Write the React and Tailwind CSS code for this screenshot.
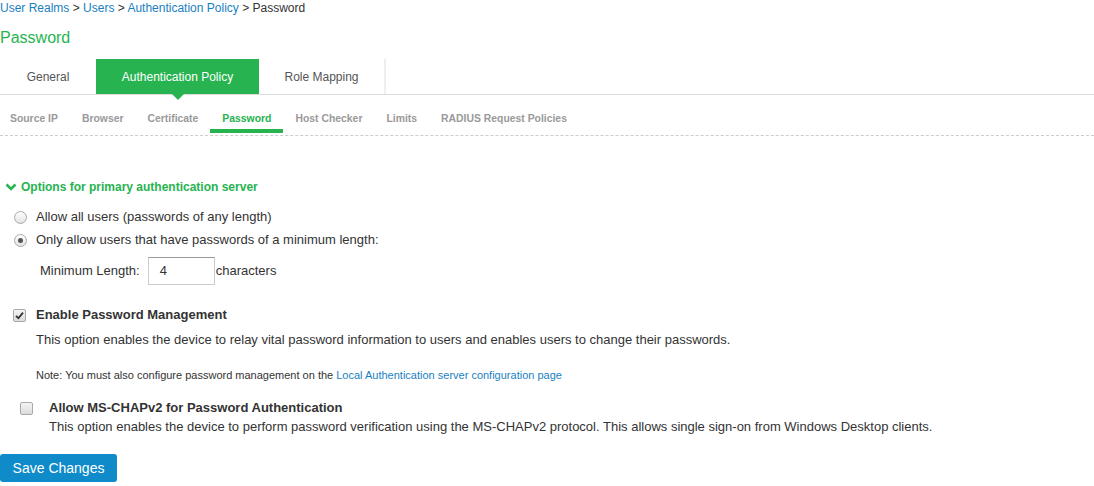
import React from "react";

const GREEN = "#26b350";

function Radio({ checked }) {
  return (
    <span className="flex items-center justify-center w-[13px] h-[13px] rounded-full border border-[#a9a9a9] bg-gradient-to-b from-white to-[#e3e3e3]">
      {checked && <span className="block w-[5px] h-[5px] rounded-full bg-[#555]" />}
    </span>
  );
}

function Check({ checked }) {
  return (
    <span className="flex items-center justify-center w-[13px] h-[13px] rounded-[2px] border border-[#a9a9a9] bg-gradient-to-b from-[#f4f4f4] to-[#dcdcdc]">
      {checked && (
        <svg width="9" height="9" viewBox="0 0 9 9">
          <path d="M1 4.8 L3.4 7.2 L8 1.6" fill="none" stroke="#333" strokeWidth="1.8" />
        </svg>
      )}
    </span>
  );
}

export default function App() {
  const subTabs = ["Source IP", "Browser", "Certificate", "Password", "Host Checker", "Limits", "RADIUS Request Policies"];

  return (
    <div className="w-[1094px] h-[486px] bg-white text-[#333] font-['Liberation_Sans',Arial,sans-serif] overflow-hidden">
      {/* Breadcrumb */}
      <div className="h-[16px] leading-[16px] text-[12px]">
        <span className="text-[#1a7fc1]">User Realms</span> &gt;{" "}
        <span className="text-[#1a7fc1]">Users</span> &gt;{" "}
        <span className="text-[#1a7fc1]">Authentication Policy</span> &gt; Password
      </div>

      <h1 className="mt-[12px] h-[20px] leading-[20px] text-[16px] font-normal" style={{ color: GREEN }}>
        Password
      </h1>

      {/* Main tabs */}
      <div className="mt-[11px] flex h-[36px] border-b border-[#ddd] text-[12px]">
        <div className="w-[96px] flex items-center justify-center text-[#555]">General</div>
        <div className="relative w-[163px] flex items-center justify-center text-white bg-[#26b350]">
          Authentication Policy
          <span className="absolute left-1/2 -translate-x-1/2 top-full w-0 h-0 border-l-[6px] border-r-[6px] border-t-[6px] border-l-transparent border-r-transparent border-t-[#26b350]" />
        </div>
        <div className="w-[127px] flex items-center justify-center text-[#555] border-r-2 border-[#eee]">Role Mapping</div>
      </div>

      {/* Sub tabs */}
      <div className="border-b border-dashed border-[#ccc] pb-[2px]">
        <div className="flex pt-[17px] -ml-[2px] text-[10.4px] font-bold text-[#9a9a9a]">
          {subTabs.map((t) => (
            <div key={t} className="px-[12px]">
              <div className={"leading-[14px] pb-[3px] " + (t === "Password" ? "text-[#26b350]" : "")}>{t}</div>
              <div className={"h-[4px] -mx-[12px] " + (t === "Password" ? "bg-[#26b350]" : "")} />
            </div>
          ))}
        </div>
      </div>

      {/* Options header */}
      <div className="mt-[44px] flex items-center gap-[4px] pl-[5px] h-[14px] text-[12px] font-bold" style={{ color: GREEN }}>
        <svg width="12" height="10" viewBox="0 0 12 10">
          <path d="M1.5 2.5 L6 7 L10.5 2.5" fill="none" stroke={GREEN} strokeWidth="2.6" />
        </svg>
        <span>Options for primary authentication server</span>
      </div>

      {/* Radios */}
      <div className="mt-[15px] text-[13px] leading-[16px]">
        <div className="flex items-center h-[16px] pl-[14px] gap-[9px]">
          <Radio />
          <span>Allow all users (passwords of any length)</span>
        </div>
        <div className="mt-[7px] flex items-center h-[16px] pl-[14px] gap-[9px]">
          <Radio checked />
          <span>Only allow users that have passwords of a minimum length:</span>
        </div>
        <div className="mt-[9px] flex items-center pl-[40px]">
          <span className="mr-[8px]">Minimum Length:</span>
          <div className="w-[67px] h-[28px] border border-[#ccc] border-t-[#999] pl-[11px] flex items-center text-[13px]">4</div>
          <span className="ml-[1px]">characters</span>
        </div>
      </div>

      {/* Password management */}
      <div className="mt-[22px] text-[13px] leading-[16px]">
        <div className="flex items-center h-[16px] pl-[13px] gap-[10px]">
          <Check checked />
          <span className="font-bold">Enable Password Management</span>
        </div>
        <div className="mt-[9px] pl-[36px]">
          This option enables the device to relay vital password information to users and enables users to change their passwords.
        </div>
        <div className="mt-[20px] pl-[36px] text-[11px] leading-[14px]">
          Note: You must also configure password management on the{" "}
          <span className="text-[#1a7fc1]">Local Authentication server configuration page</span>
        </div>
      </div>

      {/* MS-CHAPv2 */}
      <div className="mt-[18px] text-[13px] leading-[16px]">
        <div className="flex items-center h-[16px] pl-[20px] gap-[16px]">
          <Check />
          <span className="font-bold">Allow MS-CHAPv2 for Password Authentication</span>
        </div>
        <div className="mt-[3px] pl-[49px]">
          This option enables the device to perform password verification using the MS-CHAPv2 protocol. This allows single sign-on from Windows Desktop clients.
        </div>
      </div>

      <button className="mt-[19px] w-[117px] h-[28px] rounded-[3px] bg-[#0f8bc9] text-white text-[14px]">
        Save Changes
      </button>
    </div>
  );
}
